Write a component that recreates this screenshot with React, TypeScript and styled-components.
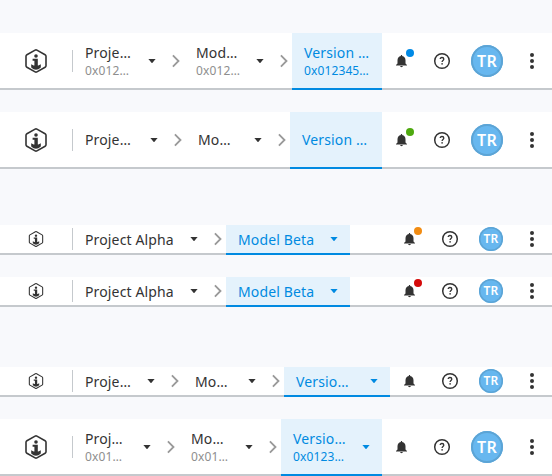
import React from "react";
import styled, { createGlobalStyle } from "styled-components";

const GlobalStyle = createGlobalStyle`
  * { box-sizing: border-box; }
  body {
    margin: 0;
    background: #f8f9fc;
    color: #333;
    font-family: "Noto Sans", sans-serif;
  }
`;

const Page = styled.main`
  width: 552px;
  height: 476px;
  overflow: hidden;
`;

const Bar = styled.header<{ $small: boolean; $gap: number }>`
  display: flex;
  height: ${(p) => (p.$small ? 30 : 57)}px;
  margin-top: ${(p) => p.$gap}px;
  background: #fff;
  box-shadow: inset 0 -2px #c5c9cd;
`;

const Brand = styled.div<{ $small: boolean }>`
  display: flex;
  align-items: center;
  justify-content: center;
  width: 72px;
  height: ${(p) => (p.$small ? 28 : 56)}px;
`;

const Divider = styled.div<{ $small: boolean }>`
  width: 1px;
  height: 22px;
  margin-top: ${(p) => (p.$small ? 3 : 17)}px;
  background: #c5c9cd;
`;

const Crumb = styled.div<{ $active?: boolean; $width: number }>`
  display: flex;
  align-items: center;
  justify-content: space-between;
  width: ${(p) => p.$width}px;
  height: 100%;
  padding: 0 12px 2px;
  color: ${(p) => (p.$active ? "#008ae1" : "#333")};
  background: ${(p) => (p.$active ? "#e4f2fc" : "transparent")};
  box-shadow: ${(p) => (p.$active ? "inset 0 -2px #008ae1" : "none")};
`;

const CrumbText = styled.div`
  display: flex;
  flex-direction: column;
  white-space: nowrap;
`;

const Title = styled.span<{ $paired: boolean }>`
  font-size: 14px;
  line-height: ${(p) => (p.$paired ? 20 : 22)}px;
  letter-spacing: 0.14px;
  padding-top: ${(p) => (p.$paired ? 0 : 1)}px;
`;

const Identifier = styled.span<{ $active?: boolean }>`
  font-size: 12px;
  line-height: 16px;
  letter-spacing: 0.12px;
  color: ${(p) => (p.$active ? "#008ae1" : "#8e8e8e")};
`;

const Separator = styled.div<{ $small: boolean }>`
  display: flex;
  align-items: center;
  justify-content: center;
  width: 16px;
  height: ${(p) => (p.$small ? 28 : 56)}px;
`;

const Actions = styled.div<{ $small: boolean }>`
  display: flex;
  align-items: center;
  height: ${(p) => (p.$small ? 28 : 56)}px;
  margin-left: auto;
`;

const Slot = styled.div<{ $width: number }>`
  position: relative;
  display: flex;
  align-items: center;
  justify-content: center;
  width: ${(p) => p.$width}px;
  height: 24px;
`;

const Badge = styled.span<{ $color: string }>`
  position: absolute;
  top: 0;
  left: 24px;
  width: 8px;
  height: 8px;
  border-radius: 50%;
  background: ${(p) => p.$color};
`;

const Avatar = styled.div<{ $small: boolean }>`
  display: flex;
  align-items: center;
  justify-content: center;
  flex: none;
  width: ${(p) => (p.$small ? 24 : 32)}px;
  height: ${(p) => (p.$small ? 24 : 32)}px;
  border-radius: 50%;
  box-shadow: inset 0 0 0 ${(p) => (p.$small ? 1.5 : 2)}px #5ca4d5;
  background: #67b7ef;
  color: #fff;
  font-size: ${(p) => (p.$small ? 12 : 16)}px;
  font-weight: 600;
  letter-spacing: 0.2px;
  line-height: 1;
`;

const Logo = ({ small }: { small: boolean }) => (
  <svg width={small ? 16 : 24} height={small ? 16 : 24} viewBox="0 0 24 24">
    <path
      d="M11.1 1.1Q12 .6 12.9 1.1L21.1 5.8Q22 6.3 22 7.3V16.7Q22 17.7 21.1 18.2L12.9 22.9Q12 23.4 11.1 22.9L2.9 18.2Q2 17.7 2 16.7V7.3Q2 6.3 2.9 5.8Z"
      fill="none" stroke="#333" strokeWidth="1.6"
    />
    <circle cx="12" cy="7" r="1.8" fill="#333" />
    <path
      d="M8.6 9.8H13.8V16.4H14.4L16.8 15.3V18.5Q14.5 20.7 12 20.7T7.2 18.5V15.3L9.6 16.4H10.4V11.7H8.6Z"
      fill="#333"
    />
  </svg>
);

const Caret = () => (
  <svg width="8" height="4" viewBox="0 0 8 4">
    <path d="M.4 0H7.6L4.5 3.7Q4 4.2 3.5 3.7Z" fill="currentColor" />
  </svg>
);

const Chevron = () => (
  <svg width="16" height="16" viewBox="0 0 16 16">
    <path d="M4.9 2.4 10.5 8l-5.6 5.6" fill="none" stroke="#999" strokeWidth="1.8" />
  </svg>
);

const Bell = () => (
  <svg width="16" height="16" viewBox="0 0 16 16">
    <path
      d="M6.9 2h1.2v.9Q11.5 3.7 11.5 7.3v3.1L13 11.9v.7H2v-.7l1.5-1.5V7.3Q3.5 3.7 6.9 2.9ZM6 13.1h3q-.3 1.1-1.5 1.1T6 13.1Z"
      fill="#333"
    />
  </svg>
);

const Help = () => (
  <svg width="18" height="18" viewBox="0 0 18 18">
    <circle cx="9" cy="9" r="7.3" fill="none" stroke="#333" strokeWidth="1.5" />
    <path d="M7.2 7.1Q7.2 5.5 9 5.5t1.8 1.5c0 1.5-1.7 1.5-1.7 3.1" fill="none" stroke="#333" strokeWidth="1.3" />
    <rect x="8.4" y="11.1" width="1.4" height="1.5" fill="#333" />
  </svg>
);

const More = () => (
  <svg width="4" height="16" viewBox="0 0 4 16" fill="#333">
    <circle cx="2" cy="2" r="2" />
    <circle cx="2" cy="8" r="2" />
    <circle cx="2" cy="14" r="2" />
  </svg>
);

type CrumbData = { title: string; id?: string; width: number; caret?: boolean };
type BarData = { gap: number; small: boolean; badge?: string; crumbs: CrumbData[] };

const bars: BarData[] = [
  {
    gap: 33, small: false, badge: "#008ae6",
    crumbs: [
      { title: "Proje…", id: "0x012…", width: 95, caret: true },
      { title: "Mod…", id: "0x012…", width: 92, caret: true },
      { title: "Version …", id: "0x012345…", width: 90 },
    ],
  },
  {
    gap: 22, small: false, badge: "#4ea90f",
    crumbs: [
      { title: "Proje…", width: 97, caret: true },
      { title: "Mo…", width: 88, caret: true },
      { title: "Version …", width: 92 },
    ],
  },
  {
    gap: 56, small: true, badge: "#f28c13",
    crumbs: [
      { title: "Project Alpha", width: 137, caret: true },
      { title: "Model Beta", width: 124, caret: true },
    ],
  },
  {
    gap: 22, small: true, badge: "#d50a0a",
    crumbs: [
      { title: "Project Alpha", width: 137, caret: true },
      { title: "Model Beta", width: 124, caret: true },
    ],
  },
  {
    gap: 60, small: true,
    crumbs: [
      { title: "Proje…", width: 94, caret: true },
      { title: "Mo…", width: 85, caret: true },
      { title: "Versio…", width: 106, caret: true },
    ],
  },
  {
    gap: 22, small: false,
    crumbs: [
      { title: "Proj…", id: "0x01…", width: 90, caret: true },
      { title: "Mo…", id: "0x01…", width: 86, caret: true },
      { title: "Versio…", id: "0x0123…", width: 101, caret: true },
    ],
  },
];

const HeaderBar = ({ gap, small, badge, crumbs }: BarData) => (
  <Bar $small={small} $gap={gap}>
    <Brand $small={small}><Logo small={small} /></Brand>
    <Divider $small={small} />
    {crumbs.map((c, i) => {
      const active = i === crumbs.length - 1;
      return (
        <React.Fragment key={i}>
          {i > 0 && <Separator $small={small}><Chevron /></Separator>}
          <Crumb $active={active} $width={c.width}>
            <CrumbText>
              <Title $paired={!!c.id}>{c.title}</Title>
              {c.id && <Identifier $active={active}>{c.id}</Identifier>}
            </CrumbText>
            {c.caret && <Caret />}
          </Crumb>
        </React.Fragment>
      );
    })}
    <Actions $small={small}>
      <Slot $width={40}>
        <Bell />
        {badge && <Badge $color={badge} />}
      </Slot>
      <Slot $width={40}><Help /></Slot>
      <Slot $width={small ? 42 : 50}><Avatar $small={small}>TR</Avatar></Slot>
      <Slot $width={40}><More /></Slot>
    </Actions>
  </Bar>
);

export default function App() {
  return (
    <>
      <GlobalStyle />
      <Page>
        {bars.map((bar, i) => <HeaderBar key={i} {...bar} />)}
      </Page>
    </>
  );
}
